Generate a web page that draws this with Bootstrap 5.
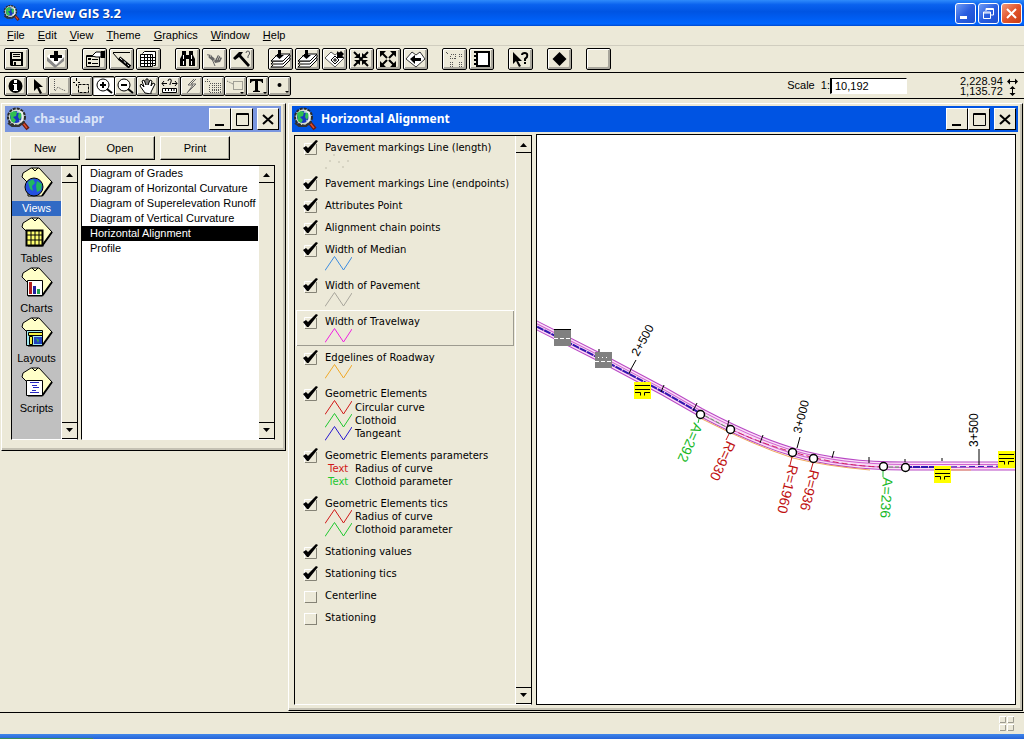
<!DOCTYPE html>
<html lang="en">
<head>
<meta charset="utf-8">
<meta name="viewport" content="width=device-width, initial-scale=1">
<title>ArcView GIS 3.2</title>
<link href="https://cdn.jsdelivr.net/npm/bootstrap@5.3.0/dist/css/bootstrap.min.css" rel="stylesheet">
<style>
:root { --face: #ece9d8; --shade: #9d9b90; }
body { background: var(--face); color: #000; font: 11px/15px "Liberation Sans", Arial, sans-serif; }
button, input { font: inherit; color: inherit; }
svg { display: block; flex: none; }
.app-frame { min-height: 100vh; }

/* application title bar */
.app-title { height: 26px; gap: 2px; padding: 0 2px 0 3px; background: linear-gradient(#2f8bfb, #0a62ee 18%, #0054e3 45%, #005ff5 75%, #0066ff 92%, #0048cc); }
.title-text { font: bold 12px/16px "Noto Sans", sans-serif; color: #fff; }
.app-title .title-text { font-family: "Open Sans", sans-serif; font-size: 13px; text-shadow: 1px 1px #0a3a9a; }
.xp-btn { width: 21px; height: 21px; padding: 0; border: 1px solid #fff; border-radius: 3px; background: linear-gradient(135deg, #6f9cf5, #2a5ee0 50%, #1c4fd0); }
.xp-btn.shut { background: linear-gradient(135deg, #f0997c, #e2542c 50%, #c83c14); }
.xp-group { gap: 2px; }

/* menu and tool bars */
.menu-strip { height: 20px; padding-left: 7px; gap: 13px; border-bottom: 1px solid #d0cdbf; }
.menu-strip a { color: #000; text-decoration: none; }
.tool-strip { height: 27px; padding-left: 4px; gap: 14px; border-bottom: 1px solid #000; }
.tool-group { gap: 2px; }
.tool-btn { width: 25px; height: 22px; padding: 0; border: 1px solid #000; border-radius: 2px; background: var(--face); box-shadow: inset 1px 1px #fff, inset -2px -2px #a8a69c; }
.tool-btn svg { margin: 0 auto; }
.draw-strip { height: 26px; padding: 0 6px 0 4px; border-bottom: 1px solid #000; }
.draw-strip .tool-btn { width: 23px; height: 20px; margin-right: -1px; }
.draw-strip .tool-btn.active { background: #fff; box-shadow: inset 1px 1px #a8a69c; }
.scale-box { width: 77px; height: 16px; padding: 0 3px; border: 1px solid #fff; border-top-color: #000; border-left: 2px solid #000; background: #fff; }
.coords { width: 58px; line-height: 10px; margin-left: 53px; }

/* document windows */
.desk { padding: 4px 1px 1px; gap: 2px; }
.doc-win { border: 1px solid #fff; border-right-color: #000; border-bottom-color: #000; background: var(--face); padding: 2px 4px 5px 3px; box-shadow: inset -2px -2px #c5c2b4; }
.project-win { width: 285px; height: 348px; }
.doc-title { height: 26px; padding: 0 2px 0 1px; background: #0054e3; }
.doc-title.idle { background: #7a96df; }
.doc-title.idle .title-text { color: #dbe4f8; }
.doc-btn { width: 22px; height: 22px; padding: 0; background: var(--face); border: 1px solid #fff; border-right-color: #000; border-bottom-color: #000; }
.doc-btn svg { margin: 0 auto; }
.cmd-row { gap: 5px; padding: 4px 0 5px 5px; }
.cmd-btn { width: 70px; height: 24px; padding: 0; background: var(--face); border: 1px solid #fff; border-right-color: #000; border-bottom-color: #000; box-shadow: inset -1px -1px #a8a69c; }
.lists { gap: 3px; padding: 0 6px 5px 6px; }
.sunken { border: 1px solid #fff; border-top-color: #000; border-left-color: #000; border-right-color: #000; }
.kinds { background: #c0c0c0; width: 67px; }
.kind { display: block; width: 49px; height: 50px; border: 0; padding: 0; background: none; text-align: center; }
.kind svg { margin: 1px auto 2px; }
.kind span { display: block; }
.kind.active span { background: #316ac5; color: #fff; }
.docs { background: #fff; }
.docs button { display: block; width: 100%; height: 15px; padding: 0 0 0 8px; border: 0; background: none; text-align: left; white-space: nowrap; }
.docs .docs-list button.active { background: #000; color: #fff; }
.scroller { width: 16px; background: var(--face); border-left: 1px solid #fff; flex: none; }
.scroller button, .docs .scroller button { width: 100%; height: 17px; padding: 0; border: 0; background: var(--face); border-bottom: 1px solid #000; }
.scroller button:last-child, .docs .scroller button:last-child { border-top: 1px solid #000; }
.scroller svg { margin: 0 auto; }

/* view window */
.view-body { gap: 4px; padding: 2px 2px 0 2px; }
.legend { width: 238px; margin-top: 1px; }
.legend-list { font: 10px/13px "DejaVu Sans", sans-serif; }
.theme { padding: 4px 0 4px 7px; white-space: nowrap; border: 1px solid transparent; border-width: 0 1px; }
.theme.picked { box-shadow: inset 1px 1px #fff, inset -1px -1px var(--shade); }
.theme label { display: flex; align-items: center; height: 14px; gap: 7px; }
.theme input { appearance: none; width: 15px; height: 15px; margin: 0; background: url("data:image/svg+xml,%3Csvg xmlns='http://www.w3.org/2000/svg' width='15' height='15' shape-rendering='crispEdges'%3E%3Cpath d='M1.5 14V3.5H13' stroke='white' fill='none'/%3E%3Cpath d='M2 14.500H13.500V4' stroke='%23858376' fill='none'/%3E%3C/svg%3E"); }
.theme input:checked { background-image: url("data:image/svg+xml,%3Csvg xmlns='http://www.w3.org/2000/svg' width='15' height='15'%3E%3Cpath d='M1.5 14V3.5H13' stroke='white' fill='none'/%3E%3Cpath d='M2 14.500H13.500V4' stroke='%23858376' fill='none'/%3E%3Cpath d='M0 8L3 6L5 8L13 0L15 1L5.500 13H4Z' fill='black'/%3E%3C/svg%3E"); }
.symbols { padding-left: 22px; }
.symbols > div { display: flex; align-items: center; gap: 3px; height: 13px; }
.symbols > .wide-row { height: 14px; }
.word { width: 27px; padding-left: 3px; }
.map-pane { border: 1px solid #000; background: #fff; min-height: 300px; position: relative; }
.map-pane svg { position: absolute; width: 100%; height: 100%; }
.status { height: 22px; border-top: 1px solid #000; padding-right: 9px; }
.taskbar-edge { height: 5px; background: linear-gradient(#3f86ea, #2663d8); }
.start-edge { width: 93px; height: 1px; background: #3c8c5c; }
</style>
</head>
<body>
<svg width="0" height="0" class="position-absolute" aria-hidden="true">
  <symbol id="logo" viewBox="0 0 24 24">
    <path d="M17 16l5 6" stroke="#6a1c10" stroke-width="4"/><path d="M17 16l4 5" stroke="#e05030" stroke-width="1.500"/>
    <circle cx="10.500" cy="10" r="8.500" fill="#d4dcd0" stroke="#2a2a2a" stroke-width="2" stroke-dasharray="3 1"/>
    <circle cx="10" cy="10" r="6" fill="#1838c0"/>
    <path d="M4 6l4-2 3 1-1 4-3 1 3 3-2 3-3-2zM13 4l3 4-2 5-2-3z" fill="#30c050"/>
    <path d="M11 5h5v9h-3" fill="none" stroke="#fff"/><path d="M2 16l4 3h7l5-4" fill="none" stroke="#333" stroke-width="2"/>
  </symbol>
  <symbol id="up" viewBox="0 0 9 5"><path d="M1 5L4.500 1L8 5z"/></symbol>
  <symbol id="down" viewBox="0 0 9 5"><path d="M1 0L4.500 4L8 0z"/></symbol>
  <symbol id="shirt" viewBox="0 0 34 31">
    <path d="M11 1h8l13 14L22 29H8V16L2 10l1-4z" fill="#ffffc8" stroke="#000"/><path d="M12 1l3 3 3-3" fill="none" stroke="#000"/><path d="M32 15L22 29" stroke="#000" stroke-width="2"/>
  </symbol>
  <symbol id="zig" viewBox="0 0 27 15"><path d="M0 14.500L9.500 .5L18.500 14L27 1" fill="none" stroke="currentColor" stroke-width="1"/></symbol>
  <symbol id="sheets" viewBox="0 0 23 20">
    <path d="M2 18h12l7-7V9M2 15h12l7-7V6M2 12h12l7-7" fill="#fff" stroke="#000"/><path d="M2 12l7-7h12l-7 7zM2 15l2-2M2 18l2-2" fill="#fff" stroke="#000"/><path d="M9 1h3v5h3l-4.500 4L6 6h3z"/>
  </symbol>
</svg>

<div class="app-frame d-flex flex-column">
  <header class="app-title d-flex align-items-center">
    <svg width="17" height="18"><use href="#logo"/></svg>
    <span class="title-text me-auto text-nowrap">ArcView GIS 3.2</span>
    <div class="xp-group d-flex" role="group" aria-label="Application window">
      <button class="xp-btn" aria-label="Minimize"><svg width="19" height="19"><path d="M4 12h7v3H4z" fill="#fff"/></svg></button>
      <button class="xp-btn" aria-label="Restore"><svg width="19" height="19" fill="none" stroke="#fff"><path d="M7 7V4.500h7.500V11H12M7 5.500h7"/><path d="M4.500 8h7v6.500h-7zM4 9h8"/></svg></button>
      <button class="xp-btn shut" aria-label="Close"><svg width="19" height="19"><path d="M5 5l9 9M14 5l-9 9" stroke="#fff" stroke-width="2"/></svg></button>
    </div>
  </header>

  <nav class="menu-strip d-flex align-items-center" aria-label="Main menu">
    <a href="#"><u>F</u>ile</a><a href="#"><u>E</u>dit</a><a href="#"><u>V</u>iew</a><a href="#"><u>T</u>heme</a><a href="#"><u>G</u>raphics</a><a href="#"><u>W</u>indow</a><a href="#"><u>H</u>elp</a>
  </nav>

  <div class="tool-strip d-flex align-items-center" role="toolbar" aria-label="Buttons">
    <div class="tool-group d-flex">
      <button class="tool-btn" aria-label="Save project"><svg width="19" height="16"><path d="M3 1h13v14H4l-1-1z"/><path d="M5 2h9v6H5z" fill="#ece9d8"/><path d="M6 3.500h7M6 5.500h7" stroke="#000"/><path d="M6 10h8v4H6z" fill="#ece9d8"/><path d="M7 11h2v3H7z"/></svg></button>
    </div>
    <div class="tool-group d-flex">
      <button class="tool-btn" aria-label="Add theme"><svg width="21" height="18"><path d="M2 7v4l8 7 9-7V7l-9 7z" fill="#888"/><path d="M2 6l3-2 6 7 6-7 3 2-9 9z" fill="#fff"/><path d="M9 1h4v4h4v3h-4v3H9V8H5V5h4z"/></svg></button>
    </div>
    <div class="tool-group d-flex">
      <button class="tool-btn" aria-label="Theme properties"><svg width="21" height="18"><path d="M2.500 5.500h13v11h-13z" fill="#ece9d8" stroke="#000"/><path d="M4 8h3v2H4zM4 12h3v2H4z"/><path d="M8 9.500h6M8 13.500h6M2 6.500h13" stroke="#000"/><path d="M8 6l4-4h5v5h-5z" fill="#fff" stroke="#000"/><path d="M17 1h4v7h-4z"/></svg></button>
      <button class="tool-btn" aria-label="Edit legend"><svg width="21" height="18"><path d="M2 2.500h17" stroke="#000"/><path d="M2 3l6 7" stroke="#000"/><path d="M8 8l11 9" stroke="#000" stroke-width="4"/><path d="M9 8l9 8" stroke="#fff" stroke-dasharray="3 2"/></svg></button>
      <button class="tool-btn" aria-label="Open theme table"><svg width="21" height="18" stroke="#000" fill="#fff"><path d="M4.500 3.500l2-2h11v14h-2M2.500 4.500h12v12h-12z"/><path d="M3 7.500h14M3 10.500h14M3 13.500h14M6.500 4v12M9.500 4v12M12.500 4v12" fill="none"/></svg></button>
    </div>
    <div class="tool-group d-flex">
      <button class="tool-btn" aria-label="Find"><svg width="21" height="18"><path d="M5 1h4v4h3V1h4v4l2 4v7h-6V9H9v7H3V9l2-4z"/><path d="M6.500 5v10M14.500 5v10" stroke="#fff" stroke-dasharray="4 2"/></svg></button>
      <button class="tool-btn" aria-label="Locate"><svg width="21" height="18" fill="#666"><path d="M3 4l4 1 4 4-2 2-4-3zM10 11l4-6 4 3-2 4-5 1z"/><path d="M8 9l3 7" stroke="#666"/><path d="M4 6h6M11 9h6M12 7h6" stroke="#ece9d8" stroke-dasharray="1 1"/></svg></button>
      <button class="tool-btn" aria-label="Query builder"><svg width="21" height="18"><path d="M2 8l6-6h4l-2 3 9 10-2 2L8 7 4 10z"/><path d="M15 3q0-2 2-2t1.500 3l-1.500 2v2" fill="none" stroke="#555"/></svg></button>
    </div>
    <div class="tool-group d-flex">
      <button class="tool-btn" aria-label="Zoom to full extent"><svg width="23" height="20"><use href="#sheets"/></svg></button>
      <button class="tool-btn" aria-label="Zoom to active theme"><svg width="23" height="20"><use href="#sheets"/></svg></button>
      <button class="tool-btn" aria-label="Zoom to selected"><svg width="21" height="18"><path d="M1 8l6-6 4 3 4-3 5 6-9 9z" fill="#fff" stroke="#555"/><path d="M11 6l4 4-4 4-4-4zM9 10h4M11 8v4" fill="none" stroke="#000"/><path d="M13 1v7h7l-2-2 2-2-3-3-2 2z"/></svg></button>
      <button class="tool-btn" aria-label="Zoom in"><svg width="21" height="18"><path d="M3 2l14 14M17 2L3 16" stroke="#000" stroke-width="2"/><path d="M9 3v5H3zM11 3v5h6zM9 15v-5H3zM11 15v-5h6z"/></svg></button>
      <button class="tool-btn" aria-label="Zoom out"><svg width="21" height="18"><path d="M3 2l14 14M17 2L3 16" stroke="#000" stroke-width="2"/><path d="M2 1h6L2 7zM18 1h-6l6 6zM2 17h6l-6-6zM18 17h-6l6-6z"/><path d="M8 9l2-2 2 2-2 2z" fill="#ece9d8"/></svg></button>
      <button class="tool-btn" aria-label="Zoom previous"><svg width="21" height="18"><path d="M1 9l6-7 4 3 4-3 5 7-9 8z" fill="#fff" stroke="#333"/><path d="M5 9l5-4v3h6v3h-6v3z"/></svg></button>
    </div>
    <div class="tool-group d-flex">
      <button class="tool-btn" aria-label="Select features"><svg width="21" height="18" fill="none" stroke="#555" stroke-dasharray="1 1" shape-rendering="crispEdges"><path d="M6.500 4.500h5v4h-5zM2 2l3 3"/><path d="M15 4h4M15 6h4M6 12h4M6 14h4M6 16h4M15 12h4M15 14h4M15 16h4"/></svg></button>
      <button class="tool-btn" aria-label="Clear selection"><svg width="21" height="18"><path d="M6 2h12v14H6z" fill="#fff" stroke="#000" stroke-width="2"/><path d="M2 1h3v16H2z" fill="#ece9d8"/><path d="M3 2h2M3 6h2M3 10h2M3 14h2" stroke="#000" stroke-width="2"/></svg></button>
    </div>
    <div class="tool-group d-flex">
      <button class="tool-btn" aria-label="Help"><svg width="21" height="18"><path d="M3 2v12l3-3 3 6 2-1-3-5h4z"/><path d="M12 5q0-2 3-2t2 4l-2 2v2M15 12v2" fill="none" stroke="#000" stroke-width="2"/></svg></button>
    </div>
    <div class="tool-group d-flex">
      <button class="tool-btn" aria-label="Marker"><svg width="21" height="18"><path d="M10.500 2l7 7-7 7-7-7z"/></svg></button>
    </div>
    <div class="tool-group d-flex">
      <button class="tool-btn" aria-label="Blank"></button>
    </div>
  </div>

  <div class="draw-strip d-flex align-items-center" role="toolbar" aria-label="Tools">
    <button class="tool-btn" aria-label="Identify"><svg width="19" height="16"><circle cx="9.500" cy="8" r="7"/><path d="M8 2h3v3H8zM7 6h4v6h1v1H7v-1h1V7H7z" fill="#fff"/></svg></button>
    <button class="tool-btn" aria-label="Pointer"><svg width="19" height="16"><path d="M6 1v12l3-3 3 6 2-1-3-6h4z"/></svg></button>
    <button class="tool-btn" aria-label="Vertex edit"><svg width="19" height="16" fill="none" stroke="#555" stroke-dasharray="1 1"><path d="M4.500 1v12M5 13l3-4 3 2 5 2"/></svg></button>
    <button class="tool-btn" aria-label="Select feature"><svg width="19" height="16" fill="none" stroke="#000"><path d="M4.500 0v3M4.500 6v2M1 4.500h2M6 4.500h2"/><path d="M6.500 6.500h10v8h-10z" stroke-dasharray="3 1"/></svg></button>
    <button class="tool-btn active" aria-label="Zoom in tool"><svg width="19" height="16" fill="none" stroke="#000"><circle cx="9" cy="7" r="6"/><path d="M6 7h6M9 4v6" stroke-width="2"/><path d="M13 11l5 4" stroke-width="2"/></svg></button>
    <button class="tool-btn" aria-label="Zoom out tool"><svg width="19" height="16" fill="#fff" stroke="#000"><circle cx="8" cy="7" r="6"/><path d="M5 7h6" stroke-width="2"/><path d="M12 11l5 4" stroke-width="2"/></svg></button>
    <button class="tool-btn" aria-label="Pan"><svg width="19" height="16"><path d="M7 15L2 8l1-2 3 3L4 3l2-1 2 5V1h2v6l2-5 2 1-1 5 2-3 2 1-4 8v2z" fill="#fff" stroke="#000"/></svg></button>
    <button class="tool-btn" aria-label="Measure"><svg width="19" height="16" fill="none" stroke="#000"><path d="M2 5.500h5M12 5.500h5M4 3L2 5.500 4 8M15 3l2 2.500L15 8M8 3q0-2 2-2t1 3l-1 2v1"/><path d="M2.500 10.500h14v4h-14z" fill="#fff"/><path d="M5.500 11v2M8.500 11v2M11.500 11v2M14 11v2"/></svg></button>
    <button class="tool-btn" aria-label="Hot link"><svg width="19" height="16"><path d="M12 1L6 7h5l-6 8M14 1L9 6h5l-8 8" fill="none" stroke="#666"/></svg></button>
    <button class="tool-btn" aria-label="Area of interest"><svg width="19" height="16" fill="none" stroke="#555" stroke-dasharray="1 1" shape-rendering="crispEdges"><path d="M3.500 1v4M1 3.500h5M5.500 5.500h11v9h-11zM8 7.500h7M8 9.500h7M8 11.500h7M8 12.500h7"/></svg></button>
    <button class="tool-btn" aria-label="Label"><svg width="19" height="16" fill="none" stroke="#555" stroke-dasharray="1 1"><path d="M1 3l6 3M7.500 3.500h9v8h-9z"/><path d="M14 14h4l-2 2z" fill="#000" stroke="none"/></svg></button>
    <button class="tool-btn" aria-label="Text"><svg width="19" height="16"><path d="M2 1h13v4h-1q0-2-3-2H10v9q0 1 2 1v1H5v-1q2 0 2-1V3H6Q3 3 3 5H2zM15 14h4l-2 2z"/></svg></button>
    <button class="tool-btn" aria-label="Draw point"><svg width="19" height="16"><circle cx="9.500" cy="7" r="2"/><path d="M15 13h4l-2 2z"/></svg></button>
    <label for="scale" class="ms-auto text-nowrap">Scale&nbsp; 1:</label>
    <input id="scale" class="scale-box" value="10,192">
    <div class="coords d-flex align-items-center justify-content-between">
      <div class="text-end">2,228.94<br>1,135.72</div>
      <svg width="11" height="20" fill="none" stroke="#000"><path d="M1 5.500h9M5.500 11v8"/><path d="M0 5.500l3-3v6zM11 5.500l-3-3v6zM5.500 10l3 3h-6zM5.500 20l3-3h-6z" fill="#000" stroke="none"/></svg>
    </div>
  </div>

  <main class="desk d-flex flex-grow-1 align-items-stretch">
    <section class="doc-win project-win d-flex flex-column flex-shrink-0" aria-label="Project">
      <div class="doc-title idle d-flex align-items-center">
        <svg width="24" height="24"><use href="#logo"/></svg>
        <span class="title-text ms-1 me-auto">cha-sud.apr</span>
        <button class="doc-btn" aria-label="Minimize"><svg width="18" height="18"><path d="M4 14h9v2H4z"/></svg></button>
        <button class="doc-btn me-1" aria-label="Maximize"><svg width="18" height="18"><path d="M3.500 3.500h12v12h-12zM3 4.500h13" fill="none" stroke="#000"/></svg></button>
        <button class="doc-btn" aria-label="Close"><svg width="18" height="18"><path d="M4 5l10 9M14 5L4 14" stroke="#000" stroke-width="2"/></svg></button>
      </div>
      <div class="cmd-row d-flex">
        <button class="cmd-btn">New</button><button class="cmd-btn">Open</button><button class="cmd-btn">Print</button>
      </div>
      <div class="lists d-flex flex-grow-1">
        <div class="kinds sunken d-flex">
          <div class="flex-grow-1">
            <button class="kind active"><svg width="34" height="32"><use href="#shirt" width="34" height="31"/><circle cx="14" cy="20" r="9" fill="#2450e0" stroke="#000"/><path d="M8 15l5-3 2 4-3 3 1 5-3-2zM17 14l5 3-1 6-4 2-1-6z" fill="#20b860"/></svg><span>Views</span></button>
            <button class="kind"><svg width="34" height="32"><use href="#shirt" width="34" height="31"/><path d="M6.500 13.500h16v15h-16z" fill="#ffff70" stroke="#000" stroke-width="2"/><path d="M6 18h17M6 23h17M11 13v16M15 13v16M19 13v16" stroke="#000"/></svg><span>Tables</span></button>
            <button class="kind"><svg width="34" height="32"><use href="#shirt" width="34" height="31"/><path d="M7.500 13.500h15v15h-15z" fill="#fff" stroke="#000"/><path d="M9 15h3v12H9z" fill="#b02020"/><path d="M13 19h3v8h-3z" fill="#2020a0"/><path d="M17 22h3v5h-3z" fill="#20a050"/></svg><span>Charts</span></button>
            <button class="kind"><svg width="34" height="32"><use href="#shirt" width="34" height="31"/><path d="M6.500 13.500h16v15h-16z" fill="#a0e8f0" stroke="#000"/><path d="M8.500 15.500h14v3h-14zM9.500 19.500h3v8h-3z" fill="#f0f040" stroke="#000"/><path d="M14 20h8v7h-8z" fill="#2040c0"/><path d="M16 21l3 2-1 3z" fill="#30b050"/></svg><span>Layouts</span></button>
            <button class="kind"><svg width="34" height="32"><use href="#shirt" width="34" height="31"/><path d="M6.500 13.500h16v15h-16z" fill="#fff" stroke="#000"/><path d="M10 15.500h9M12 18.500h5M13 20.500h6M12 23.500h4M10 25.500h9" stroke="#2828c0"/></svg><span>Scripts</span></button>
          </div>
          <div class="scroller d-flex flex-column justify-content-between">
            <button aria-label="Scroll up"><svg width="9" height="5"><use href="#up"/></svg></button>
            <button aria-label="Scroll down"><svg width="9" height="5"><use href="#down"/></svg></button>
          </div>
        </div>
        <div class="docs sunken d-flex flex-grow-1">
          <div class="docs-list flex-grow-1">
            <button>Diagram of Grades</button><button>Diagram of Horizontal Curvature</button><button>Diagram of Superelevation Runoff</button><button>Diagram of Vertical Curvature</button><button class="active">Horizontal Alignment</button><button>Profile</button>
          </div>
          <div class="scroller d-flex flex-column justify-content-between">
            <button aria-label="Scroll up"><svg width="9" height="5"><use href="#up"/></svg></button>
            <button aria-label="Scroll down"><svg width="9" height="5"><use href="#down"/></svg></button>
          </div>
        </div>
      </div>
    </section>

    <section class="doc-win d-flex flex-column flex-grow-1" aria-label="View">
      <div class="doc-title d-flex align-items-center">
        <svg width="24" height="24"><use href="#logo"/></svg>
        <span class="title-text ms-1 me-auto">Horizontal Alignment</span>
        <button class="doc-btn" aria-label="Minimize"><svg width="18" height="18"><path d="M4 14h9v2H4z"/></svg></button>
        <button class="doc-btn me-1" aria-label="Maximize"><svg width="18" height="18"><path d="M3.500 3.500h12v12h-12zM3 4.500h13" fill="none" stroke="#000"/></svg></button>
        <button class="doc-btn" aria-label="Close"><svg width="18" height="18"><path d="M4 5l10 9M14 5L4 14" stroke="#000" stroke-width="2"/></svg></button>
      </div>
      <div class="view-body d-flex flex-grow-1">
        <div class="legend sunken d-flex flex-shrink-0">
          <div class="legend-list flex-grow-1">
            <div class="theme"><label><input type="checkbox" checked>Pavement markings Line (length)</label>
              <div class="symbols"><div class="wide-row"><svg width="27" height="15" fill="#cfcbbb"><circle cx="9" cy="1" r="1"/><circle cx="5" cy="7" r="1"/><circle cx="14" cy="8" r="1"/><circle cx="23" cy="7" r="1"/><circle cx="1" cy="14" r="1"/><circle cx="18" cy="13" r="1"/></svg></div></div></div>
            <div class="theme"><label><input type="checkbox" checked>Pavement markings Line (endpoints)</label></div>
            <div class="theme"><label><input type="checkbox" checked>Attributes Point</label></div>
            <div class="theme"><label><input type="checkbox" checked>Alignment chain points</label></div>
            <div class="theme"><label><input type="checkbox" checked>Width of Median</label>
              <div class="symbols"><div class="wide-row"><svg width="27" height="15" color="#3c8ce0"><use href="#zig"/></svg></div></div></div>
            <div class="theme"><label><input type="checkbox" checked>Width of Pavement</label>
              <div class="symbols"><div class="wide-row"><svg width="27" height="15" color="#a8a69c"><use href="#zig"/></svg></div></div></div>
            <div class="theme picked"><label><input type="checkbox" checked>Width of Travelway</label>
              <div class="symbols"><div class="wide-row"><svg width="27" height="15" color="#f020e0"><use href="#zig"/></svg></div></div></div>
            <div class="theme"><label><input type="checkbox" checked>Edgelines of Roadway</label>
              <div class="symbols"><div class="wide-row"><svg width="27" height="15" color="#f0a828"><use href="#zig"/></svg></div></div></div>
            <div class="theme"><label><input type="checkbox" checked>Geometric Elements</label>
              <div class="symbols">
                <div class="wide-row"><svg width="27" height="15" color="#d01818"><use href="#zig"/></svg>Circular curve</div>
                <div><svg width="27" height="15" color="#20c830"><use href="#zig"/></svg>Clothoid</div>
                <div><svg width="27" height="15" color="#2818d0"><use href="#zig"/></svg>Tangeant</div>
              </div></div>
            <div class="theme"><label><input type="checkbox" checked>Geometric Elements parameters</label>
              <div class="symbols">
                <div><span class="word" style="color:#d01818">Text</span>Radius of curve</div>
                <div><span class="word" style="color:#20c830">Text</span>Clothoid parameter</div>
              </div></div>
            <div class="theme"><label><input type="checkbox" checked>Geometric Elements tics</label>
              <div class="symbols">
                <div><svg width="27" height="15" color="#d01818"><use href="#zig"/></svg>Radius of curve</div>
                <div><svg width="27" height="15" color="#20c830"><use href="#zig"/></svg>Clothoid parameter</div>
              </div></div>
            <div class="theme"><label><input type="checkbox" checked>Stationing values</label></div>
            <div class="theme"><label><input type="checkbox" checked>Stationing tics</label></div>
            <div class="theme"><label><input type="checkbox">Centerline</label></div>
            <div class="theme"><label><input type="checkbox">Stationing</label></div>
          </div>
          <div class="scroller d-flex flex-column justify-content-between">
            <button aria-label="Scroll up"><svg width="9" height="5"><use href="#up"/></svg></button>
            <button aria-label="Scroll down"><svg width="9" height="5"><use href="#down"/></svg></button>
          </div>
        </div>

        <div class="map-pane flex-grow-1">
          <svg viewBox="537 135 478 569" preserveAspectRatio="xMinYMin slice" font-family="Liberation Sans, Arial, sans-serif" font-size="12">
            <defs><path id="road" d="M530 322L603 359L665 392L700 412Q755 441 793 452Q840 466 905 466L975 466L1025 466"/></defs>
            <g fill="none">
              <use href="#road" stroke="#b848c4" stroke-width="9"/>
              <use href="#road" stroke="#fbe0f8" stroke-width="7"/>
              <use href="#road" stroke="#d060d0" stroke-width="4"/>
              <use href="#road" stroke="#f8dcf4" stroke-width="2"/>
              <path d="M530 323L603 360L665 393L700 413M905 467L942 467" stroke="#3018b0" stroke-dasharray="7 1" stroke-width="2"/>
              <path d="M942 467L1015 466" stroke="#3018b0" stroke-dasharray="6 3"/>
              <path d="M730 429Q765 445 793 452Q840 466 883 467" stroke="#d02060" stroke-dasharray="6 3"/>
              <path d="M700 413L730 429M883 467H905" stroke="#60a060" stroke-dasharray="4 2"/>
              <path d="M700 418Q755 446 793 458Q825 466 870 470M942 470H971" stroke="#f0a860"/>
              <path d="M599 349v5M629 374l2-5 5-9M661 392l3-7M693 411l4-8M727 428l2-8M760 443l3-8M797 448l3-11M832 458l2-7M869 463v-6M905 462v-3M942 461v-3M979 465v-16" stroke="#000"/>
            </g>
            <path d="M554 329h17v17h-17zM595 352h17v16h-17z" fill="#808080"/>
            <path d="M554 338.500h17M595 361.500h17" stroke="#fff" stroke-dasharray="4 2"/><path d="M554 329.500h17" stroke="#000"/>
            <path d="M598 357.500h10" stroke="#fff" stroke-dasharray="1 3"/>
            <g fill="none" stroke="#000"><g id="sign"><path d="M634 382h17v17h-17z" fill="#ff0" stroke="none"/><path d="M635 385.500h15M635 389.500h15M635 392.500h5.500v3M650 392.500h-5.500v3"/></g><use href="#sign" x="300" y="84"/><use href="#sign" x="364" y="69"/></g>
            <g fill="#fff" stroke="#000" stroke-width="1.500"><circle cx="700.500" cy="414.500" r="4"/><circle cx="730.500" cy="429.500" r="4"/><circle cx="792.500" cy="452.500" r="4"/><circle cx="813.500" cy="458.500" r="4"/><circle cx="883.500" cy="466.500" r="4"/><circle cx="905.500" cy="467.500" r="4"/></g>
            <path d="M699 419l-1 4M883 471v6" stroke="#20c030"/><path d="M729 434l-3 6M792 457l-2 8M813 463l-2 7" stroke="#c81818"/>
            <text transform="translate(638 357) rotate(-61)">2+500</text>
            <text transform="translate(801 434) rotate(-76)">3+000</text>
            <text transform="translate(978 447) rotate(-90)">3+500</text>
            <g font-size="14">
              <text transform="translate(694 422) rotate(114)" fill="#18b828">A=292</text>
              <text transform="translate(727 440) rotate(115)" fill="#c01010">R=930</text>
              <text transform="translate(789 464) rotate(104)" fill="#c01010">R=1960</text>
              <text transform="translate(810 469) rotate(104)" fill="#c01010">R=936</text>
              <text transform="translate(883 477) rotate(94)" fill="#18b828">A=236</text>
            </g>
          </svg>
        </div>
      </div>
    </section>
  </main>

  <footer>
    <div class="status d-flex align-items-center justify-content-end">
      <svg width="16" height="16" fill="none"><path d="M.5 7V.5H7M8.500 7V.5H15M.5 15V8.500H7M8.500 15V8.500H15" stroke="#fff"/><path d="M1 6.500h5.500V1M9 6.500h5.500V1M1 14.500h5.500V9M9 14.500h5.500V9" stroke="#9d9b90"/></svg>
    </div>
    <div class="taskbar-edge d-flex align-items-end"><div class="start-edge"></div></div>
  </footer>
</div>
<script src="https://cdn.jsdelivr.net/npm/bootstrap@5.3.0/dist/js/bootstrap.bundle.min.js"></script>
</body>
</html>
